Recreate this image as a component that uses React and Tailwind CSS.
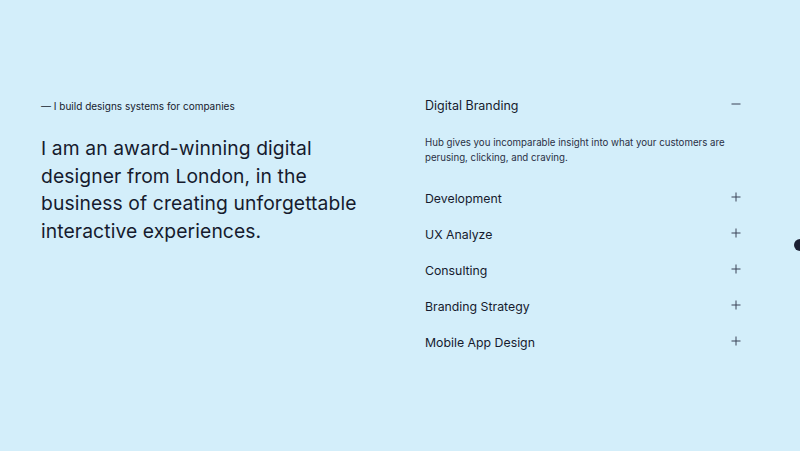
export default function App() {
  const items = ["Development", "UX Analyze", "Consulting", "Branding Strategy", "Mobile App Design"];
  const Plus = () => (
    <svg width="10" height="10" viewBox="0 0 10 10" className="text-[#3b4256]">
      <path d="M5 0.5V9.5M0.5 5H9.5" stroke="currentColor" strokeWidth="1" />
    </svg>
  );
  const Minus = () => (
    <svg width="10" height="10" viewBox="0 0 10 10" className="text-[#3b4256]">
      <path d="M0.5 5H9.5" stroke="currentColor" strokeWidth="1" />
    </svg>
  );
  return (
    <div className="relative w-[800px] h-[451px] overflow-hidden bg-[#d3eefa] text-[#161b2e]" style={{ fontFamily: "Inter, 'Noto Sans', sans-serif" }}>
      <div className="flex pl-[41px] pt-[96px]">
        <div className="w-[384px]">
          <div className="h-[20px] flex items-center text-[10px]">— I build designs systems for companies</div>
          <h1 className="mt-[19px] text-[19.3px] leading-[27.7px] font-normal w-[340px] tracking-[0.1px]">
            I am an award-winning digital designer from London, in the business of creating unforgettable interactive experiences.
          </h1>
        </div>
        <div className="w-[316px]">
          <div className="h-[20px] flex items-center justify-between">
            <span className="text-[12.5px]">Digital Branding</span>
            <span className="-mt-[4px]"><Minus /></span>
          </div>
          <p className="mt-[19px] text-[9.7px] leading-[15px] text-[#2a3045]">
            Hub gives you incomparable insight into what your customers are perusing, clicking, and craving.
          </p>
          <div className="mt-[16px]">
            {items.map((t) => (
              <div key={t} className="h-[36px] flex items-center justify-between">
                <span className="text-[12.3px]">{t}</span>
                <span className="-mt-[4px]"><Plus /></span>
              </div>
            ))}
          </div>
        </div>
      </div>
      <div className="absolute left-[794px] top-[239px] w-[12px] h-[12px] rounded-full bg-[#1c2033]"></div>
    </div>
  );
}
